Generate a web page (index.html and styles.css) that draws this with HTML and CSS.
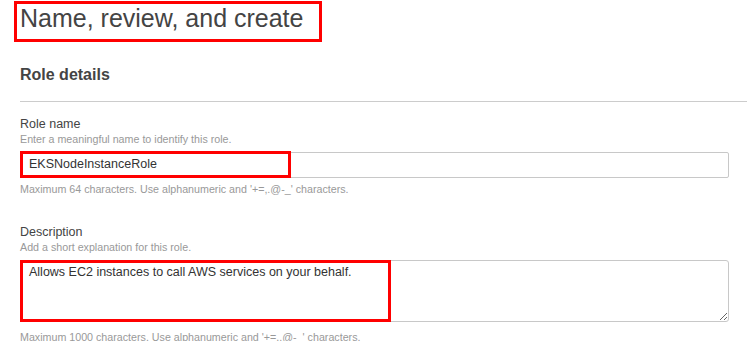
FILE: index.html
```html
<!DOCTYPE html>
<html lang="en">
<head>
<meta charset="utf-8">
<title>Name, review, and create</title>
<link rel="stylesheet" href="styles.css">
</head>
<body>
<div class="page">
  <h1 class="title">Name, review, and create</h1>
  <h2 class="section">Role details</h2>
  <div class="form">
    <div class="field">
      <label class="label" for="role-name">Role name</label>
      <div class="hint">Enter a meaningful name to identify this role.</div>
      <div class="control">
        <input id="role-name" class="input" type="text" value="EKSNodeInstanceRole">
        <span class="mark mark-name"></span>
      </div>
      <div class="hint hint-after">Maximum 64 characters. Use alphanumeric and '+=,.@-_' characters.</div>
    </div>
    <div class="field field-desc">
      <label class="label" for="role-desc">Description</label>
      <div class="hint">Add a short explanation for this role.</div>
      <div class="control">
        <textarea id="role-desc" class="textarea">Allows EC2 instances to call AWS services on your behalf.</textarea>
        <span class="mark mark-desc"></span>
      </div>
      <div class="hint hint-after hint-last">Maximum 1000 characters. Use alphanumeric and '+=,.@-_' characters.</div>
    </div>
  </div>
</div>
</body>
</html>
```

FILE: styles.css
```css
html, body {
  margin: 0;
  padding: 0;
  background: #ffffff;
}

body {
  font-family: "Liberation Sans", Arial, sans-serif;
  color: #444444;
  overflow: hidden;
}

.page {
  padding-left: 20px;
}

.title {
  display: inline-block;
  margin: 1px 0 0 -6px;
  border: 3px solid #ff0000;
  padding: 0 16px 7px 3px;
  font-size: 25px;
  line-height: 28px;
  font-weight: normal;
  color: #444444;
}

.section {
  margin: 23px 0 0 0;
  padding-bottom: 16px;
  border-bottom: 1px solid #cccccc;
  font-size: 16px;
  line-height: 20px;
  font-weight: bold;
  color: #444444;
}

.form {
  padding-right: 18px;
  padding-top: 14px;
}

.field-desc {
  margin-top: 27px;
}

.label {
  display: block;
  font-size: 12.5px;
  line-height: 16px;
  color: #444444;
}

.hint {
  font-size: 10.7px;
  line-height: 15px;
  color: #999999;
}

.control {
  position: relative;
  margin-top: 5px;
}

.input {
  display: block;
  box-sizing: border-box;
  width: 100%;
  height: 26px;
  margin: 0;
  padding: 0 8px 3px;
  border: 1px solid #c8c8c8;
  border-radius: 2px;
  font-family: "Liberation Sans", Arial, sans-serif;
  font-size: 12.5px;
  color: #333333;
  background: #ffffff;
  outline: none;
}

.textarea {
  display: block;
  box-sizing: border-box;
  width: 100%;
  height: 62px;
  margin: 0;
  padding: 4px 8px;
  border: 1px solid #c8c8c8;
  border-radius: 3px;
  font-family: "Liberation Sans", Arial, sans-serif;
  font-size: 12.5px;
  line-height: 15px;
  color: #333333;
  background: #ffffff;
  resize: both;
  outline: none;
}

.hint-after {
  margin-top: 4px;
}

.hint-last {
  margin-top: 8px;
}

.mark {
  position: absolute;
  box-sizing: border-box;
  border: 3px solid #ff0000;
  pointer-events: none;
}

.mark-name {
  top: -1px;
  left: 0;
  width: 271px;
  height: 27px;
}

.mark-desc {
  top: 0;
  left: 0;
  width: 371px;
  height: 62px;
}
```
